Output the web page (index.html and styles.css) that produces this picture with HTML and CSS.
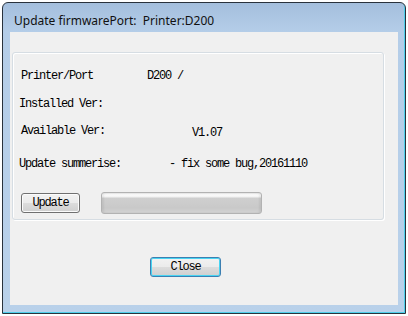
FILE: index.html
```html
<!DOCTYPE html>
<html lang="en">
<head>
    <meta charset="UTF-8">
    <title>Update firmware</title>
    <link rel="stylesheet" href="styles.css">
</head>
<body>
    <div class="window">
        <div class="titlebar">Update firmwarePort:&nbsp; Printer:D200</div>
        <div class="client">
            <div class="group">
                <div class="info">
                    <div class="row"><span class="label">Printer/Port</span><span class="value">D200 /</span></div>
                    <div class="row shift"><span class="label">Installed Ver:</span><span class="value"></span></div>
                    <div class="row"><span class="label">Available Ver:</span><span class="value ver">V1.07</span></div>
                    <div class="row shift"><span class="label">Update summerise:</span><span class="value note">- fix some bug,20161110</span></div>
                </div>
                <div class="actions">
                    <button type="button" class="btn update-btn">Update</button>
                    <div class="progress"></div>
                </div>
            </div>
            <div class="footer">
                <button type="button" class="btn close-btn">Close</button>
            </div>
        </div>
    </div>
</body>
</html>
```

FILE: styles.css
```css
body {
    margin: 0;
    background: #fff;
    font-family: "Liberation Mono", monospace;
}
.window {
    margin: 2px 2px 0 2px;
    width: 404px;
    height: 312px;
    box-sizing: border-box;
    border: 1px solid #29323c;
    border-radius: 6px 6px 0 0;
    background: linear-gradient(#a4bfdd, #b4cde8 28px, #b9d1ea);
    box-shadow: inset -1px -1px 0 #4fd0ec;
    padding: 0 7px 8px 7px;
    display: flex;
    flex-direction: column;
}
.titlebar {
    height: 29px;
    box-sizing: border-box;
    padding: 9px 0 0 4px;
    line-height: 18px;
    font-family: "Noto Sans", sans-serif;
    font-size: 12px;
    color: #111;
    white-space: pre;
}
.client {
    flex: 1;
    background: #f0f0f0;
    padding: 20px 14px 0 2px;
}
.group {
    height: 168px;
    box-sizing: border-box;
    border: 1px solid #d6dde3;
    border-radius: 3px;
    box-shadow: inset 1px 1px 0 #fff, 1px 1px 0 #fff;
    padding: 9px 0 0 8px;
}
.info {
    display: grid;
    grid-template-rows: 28px 28px 26px 40px;
    align-items: center;
}
.row {
    display: flex;
    font-size: 12px;
    letter-spacing: -1.2px;
    color: #000;
    white-space: pre;
}
.row.shift {
    margin-left: -2px;
}
.label {
    width: 126px;
}
.ver {
    padding-left: 45px;
    position: relative;
    top: 2px;
}
.note {
    padding-left: 24px;
}
.actions {
    display: flex;
    align-items: center;
    gap: 21px;
    margin-top: 8px;
}
.btn {
    font-family: "Liberation Mono", monospace;
    font-size: 12px;
    letter-spacing: -1.2px;
    color: #000;
    height: 20px;
    padding: 0;
    border: 1px solid #707070;
    border-radius: 3px;
    background: linear-gradient(#f2f2f2, #ebebeb 50%, #dddddd 50%, #cfcfcf);
    box-shadow: inset 0 0 0 1px #fbfbfb;
}
.update-btn {
    width: 59px;
}
.progress {
    width: 161px;
    height: 22px;
    box-sizing: border-box;
    border: 1px solid #b2b2b2;
    border-radius: 3px;
    background: linear-gradient(#e8e8e8, #fbfbfb 2px, #f1f1f1 4px, #cfcfcf 5px, #c9c9c9 75%, #d3d3d3);
    box-shadow: inset 2px 0 2px rgba(0,0,0,0.06), inset -2px 0 2px rgba(0,0,0,0.06);
}
.footer {
    padding: 37px 0 0 138px;
}
.close-btn {
    width: 71px;
    border-color: #3c7fb1;
    box-shadow: inset 0 0 0 1px #48d4f2;
    background: linear-gradient(#eaf6fd, #d9f0fc 50%, #bee6fd 50%, #a7d9f5);
    background: linear-gradient(#f2f2f2, #ebebeb 50%, #dddddd 50%, #cfcfcf);
}
```
